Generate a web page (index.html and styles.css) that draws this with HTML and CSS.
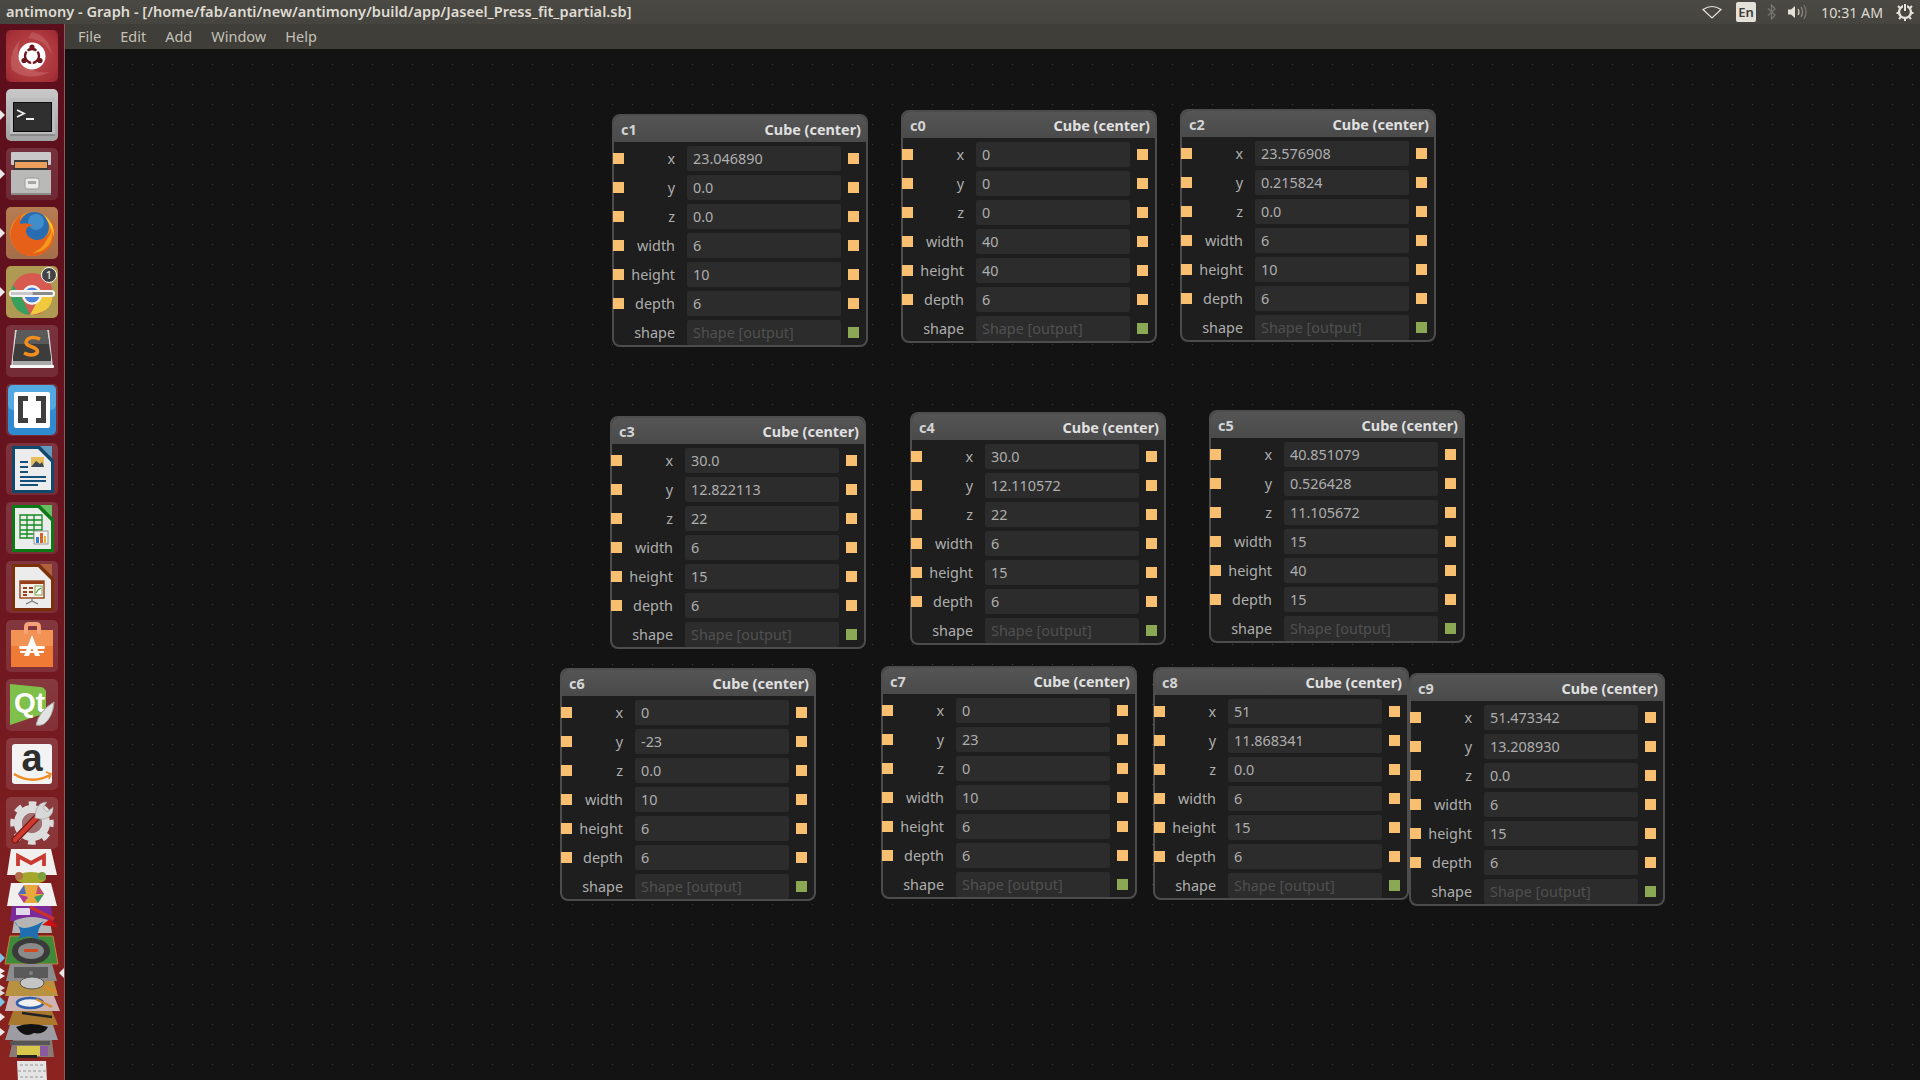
FILE: index.html
```html
<!DOCTYPE html>
<html>
<head>
  <meta charset="utf-8">
  <title>antimony - Graph</title>
  <link rel="stylesheet" href="styles.css">
</head>
<body>
  <div class="titlebar">
    <div class="window-title">antimony - Graph - [/home/fab/anti/new/antimony/build/app/Jaseel_Press_fit_partial.sb]</div>
    <div class="indicators">
      <svg class="ind-wifi" width="20" height="14" viewBox="0 0 20 14"><path d="M1 4.5 Q10 -1.5 19 4.5 L10 13 Z" fill="none" stroke="#e4e1d8" stroke-width="1.2"/></svg>
      <div class="ind-lang">En</div>
      <svg class="ind-bt" width="9" height="16" viewBox="0 0 9 16"><path d="M1 4.5 L8 11 L4.5 15 V1 L8 5 L1 11.5" fill="none" stroke="#77756f" stroke-width="1.3"/></svg>
      <svg class="ind-vol" width="20" height="16" viewBox="0 0 20 16"><path d="M0 5.5 H3 L7 2 V14 L3 10.5 H0 Z" fill="#e4e1d8"/><path d="M10 5 Q12 8 10 11" fill="none" stroke="#cfccc3" stroke-width="1.3"/><path d="M13 3 Q16 8 13 13" fill="none" stroke="#8c8a84" stroke-width="1.3"/><path d="M16 1 Q20 8 16 15" fill="none" stroke="#77756f" stroke-width="1.3"/></svg>
      <div class="ind-clock">10:31 AM</div>
      <svg class="ind-gear" width="18" height="18" viewBox="0 0 18 18"><circle cx="9" cy="9" r="6" fill="none" stroke="#e4e1d8" stroke-width="2.4"/><path d="M9 0 V9" stroke="#45443f" stroke-width="4"/><path d="M9 1 V8" stroke="#e4e1d8" stroke-width="2"/><path d="M2 3 L4 5 M16 3 L14 5 M0.5 10 H3 M17.5 10 H15 M3 16 L5 14 M15 16 L13 14 M9 18 V15.5" stroke="#e4e1d8" stroke-width="2"/></svg>
    </div>
  </div>
  <div class="desktop">
    <div class="launcher">
      <div class="tile tile-ubuntu">
        <svg width="52" height="52" viewBox="0 0 52 52"><path d="M6 40 Q22 52 44 42 Q30 44 18 36 Q8 28 14 10 Q2 24 6 40 Z" fill="#d98a8a" opacity="0.35"/><path d="M26 2 Q44 6 46 26 Q40 10 22 8 Z" fill="#d98a8a" opacity="0.3"/><circle cx="26" cy="26" r="13.5" fill="#fff"/><circle cx="26" cy="26" r="7" fill="none" stroke="#6e1520" stroke-width="2.4"/><path d="M26 26 L17 17 M26 26 L35 17 M26 26 V38" stroke="#fff" stroke-width="1.6"/><circle cx="26" cy="17" r="2.6" fill="#6e1520"/><circle cx="18" cy="30.5" r="2.6" fill="#6e1520"/><circle cx="34" cy="30.5" r="2.6" fill="#6e1520"/></svg>
      </div>
      <div class="tile tile-terminal">
        <span class="pip"></span>
        <svg width="52" height="52" viewBox="0 0 52 52"><rect x="4" y="9" width="45" height="38" rx="1" fill="#bcbcbc"/><rect x="4" y="45" width="45" height="2" fill="#8a8a8a"/><rect x="7" y="13" width="39" height="30" fill="#0c0c0c"/><rect x="8" y="14" width="37" height="28" fill="#2f2f2f"/><path d="M11 21 L18 24.5 L11 28" fill="none" stroke="#eee" stroke-width="1.8"/><rect x="20" y="29" width="8" height="2" fill="#eee"/></svg>
      </div>
      <div class="tile tile-plain">
        <span class="pip"></span>
        <svg width="52" height="52" viewBox="0 0 52 52"><rect x="5" y="4" width="40" height="13" rx="1" fill="#c9c9c9"/><rect x="8" y="12" width="34" height="10" fill="#3b3b3b"/><rect x="9" y="14" width="32" height="6" fill="#eda05e"/><path d="M5 22 H45 V47 H5 Z" fill="#b9b9b7"/><rect x="5" y="45" width="40" height="2" fill="#8a8a88"/><rect x="19" y="30" width="14" height="11" rx="2" fill="#e9e9e9" stroke="#9a9a9a"/><rect x="22" y="33" width="8" height="3" fill="#a5a5a5"/></svg>
      </div>
      <div class="tile tile-firefox">
        <span class="pip"></span>
        <svg width="52" height="52" viewBox="0 0 52 52"><circle cx="26" cy="27" r="22" fill="#f08a1c"/><circle cx="28" cy="20" r="15" fill="#2a6cb0"/><circle cx="30" cy="15" r="8" fill="#3f8ecb"/><path d="M4 30 Q5 15 17 6 Q13 12 14 17 Q22 15 28 19 Q22 18 20 23 Q19 30 29 33 Q38 34 44 25 Q48 17 45 11 Q52 21 47 34 Q41 49 26 49 Q9 49 4 30 Z" fill="#e7601a"/><path d="M38 8 Q49 16 48 30 Q45 20 42 15 Q40 11 38 8 Z" fill="#f9c32c"/><path d="M41 32 Q45 27 46 22 Q48 30 43 38 Q36 46 26 46 Q37 42 41 32 Z" fill="#f39a1c"/></svg>
      </div>
      <div class="tile tile-chrome">
        <span class="pip"></span>
        <svg width="52" height="52" viewBox="0 0 52 52"><circle cx="26" cy="28" r="21" fill="#d65a50"/><path d="M7 19 L18 36 L24 49 Q9 48 5 31 Q4 25 7 19 Z" fill="#37a05c"/><path d="M24 49 L33 32 L35 25 H46 Q50 46 24 49 Z" fill="#f0c93c"/><circle cx="26" cy="29" r="10" fill="#f3f3f3"/><circle cx="26" cy="29" r="7.5" fill="#4b82d8"/><rect x="3" y="24" width="46" height="7" rx="3.5" fill="#f6f6f6"/><rect x="5" y="26" width="42" height="3" rx="1.5" fill="#8a8a8a"/><rect x="5" y="26" width="22" height="3" rx="1.5" fill="#c9c9c9"/></svg>
        <span class="tile-badge">1</span>
      </div>
      <div class="tile tile-plain">
        <svg width="52" height="52" viewBox="0 0 52 52"><path d="M9 5 H43 L47 43 H5 Z" fill="#d2d2d2"/><path d="M11 5 H41 L45 32 V36 H7 V32 Z" fill="#3c3c3c"/><path d="M11 5 H41 L43 19 H9 Z" fill="#5a5a5a"/><rect x="7" y="36" width="38" height="4" fill="#a8a8a8"/><rect x="4" y="40" width="44" height="3" rx="1" fill="#f7f7f7"/><path d="M34 14 Q26 11 22 14 Q17 19 25 21.5 Q33 24 31 28 Q26 32 18 28" fill="none" stroke="#f28e20" stroke-width="3.6"/></svg>
      </div>
      <div class="tile tile-plain">
        <svg width="52" height="52" viewBox="0 0 52 52"><rect x="2" y="1" width="48" height="50" rx="5" fill="#2f8ad0"/><rect x="2" y="1" width="48" height="25" rx="5" fill="#52a8e0"/><rect x="8" y="8" width="36" height="36" rx="2" fill="#fff"/><path d="M22 12 H12 V39 H22 V34 H17 V17 H22 Z M30 12 H40 V39 H30 V34 H35 V17 H30 Z" fill="#3f3f3f"/></svg>
      </div>
      <div class="tile tile-plain">
        <svg width="52" height="52" viewBox="0 0 52 52"><path d="M6 3 H34 L48 17 V50 H6 Z" fill="#10486e"/><path d="M34 3 H46 V15 Z" fill="#5f9ac0"/><path d="M9 6 H32 L45 19 V47 H9 Z" fill="#ececec"/><rect x="14" y="18" width="8" height="2" fill="#14517a"/><rect x="14" y="23" width="8" height="2" fill="#14517a"/><rect x="14" y="28" width="8" height="2" fill="#14517a"/><rect x="25" y="14" width="13" height="10" fill="#e8bd5c"/><path d="M25 24 L30 18 L34 21 L36 19 L38 24 Z" fill="#3a4a56"/><rect x="14" y="33" width="26" height="2" fill="#14517a"/><rect x="14" y="37" width="26" height="2" fill="#14517a"/><rect x="14" y="41" width="18" height="2" fill="#14517a"/></svg>
      </div>
      <div class="tile tile-plain">
        <svg width="52" height="52" viewBox="0 0 52 52"><path d="M6 3 H34 L48 17 V50 H6 Z" fill="#0b7a16"/><path d="M34 3 H46 V15 Z" fill="#63c25f"/><path d="M9 6 H32 L45 19 V47 H9 Z" fill="#ececec"/><path d="M14 13 H36 V36 H14 Z M14 18 H36 M14 23 H36 M14 28 H36 M14 32 H36 M21 13 V36 M28 13 V36" fill="none" stroke="#128a20" stroke-width="1.3"/><rect x="28" y="29" width="14" height="13" fill="#f4f4f4" stroke="#999"/><rect x="30" y="35" width="3" height="6" fill="#2f7fc1"/><rect x="34" y="31" width="3" height="10" fill="#d9622b"/><rect x="38" y="34" width="2" height="7" fill="#e2b53a"/></svg>
      </div>
      <div class="tile tile-plain">
        <svg width="52" height="52" viewBox="0 0 52 52"><path d="M6 3 H34 L48 17 V50 H6 Z" fill="#7a3008"/><path d="M34 3 H46 V15 Z" fill="#b0603a"/><path d="M9 6 H32 L45 19 V47 H9 Z" fill="#ececec"/><rect x="14" y="20" width="24" height="17" fill="#f6f0ea" stroke="#98401a" stroke-width="1.4"/><rect x="14" y="20" width="24" height="3" fill="#98401a"/><rect x="17" y="26" width="4" height="2" fill="#98401a"/><rect x="17" y="30" width="4" height="2" fill="#98401a"/><rect x="17" y="33" width="4" height="2" fill="#98401a"/><rect x="23" y="26" width="4" height="2" fill="#98401a"/><rect x="23" y="30" width="4" height="2" fill="#98401a"/><rect x="29" y="25" width="7" height="9" fill="#fff" stroke="#7aa24c"/><path d="M30 32 L32 29 L35 27" fill="none" stroke="#4d9a2a" stroke-width="1.2"/><path d="M26 37 V40 M26 40 L20 43 M26 40 L32 43" stroke="#777" stroke-width="1.2"/></svg>
      </div>
      <div class="tile tile-plain">
        <svg width="52" height="52" viewBox="0 0 52 52"><path d="M5 10 H47 V47 H5 Z" fill="#ef7a35"/><path d="M5 10 H47 V26 H5 Z" fill="#f29354"/><path d="M20 14 V7 Q20 4 23 4 H30 Q33 4 33 7 V14" fill="none" stroke="#f5a27a" stroke-width="4"/><path d="M26 15 L18 36 H23 L26 27 L29 36 H34 Z" fill="#fff"/><rect x="13" y="26" width="26" height="3" rx="1.5" fill="#fff"/><rect x="14" y="31" width="24" height="2" fill="#fff"/></svg>
      </div>
      <div class="tile tile-plain">
        <svg width="52" height="52" viewBox="0 0 52 52"><path d="M4 5 L34 8 Q38 8 40 12 V34 L4 46 Z" fill="#7fc04a"/><text class="qt-mark" x="8" y="33">Qt</text><path d="M30 46 Q33 32 48 23 Q47 38 38 45 Q34 47 30 46 Z" fill="#e3e3e3" stroke="#a8a8a8"/></svg>
      </div>
      <div class="tile tile-plain">
        <svg width="52" height="52" viewBox="0 0 52 52"><rect x="6" y="6" width="40" height="40" rx="3" fill="#f3f3f3"/><text class="amazon-mark" x="26" y="33">a</text><path d="M8 36 Q26 47 44 37" fill="none" stroke="#f08c1e" stroke-width="2.4"/><path d="M40 34 L45 36 L43 41" fill="none" stroke="#f08c1e" stroke-width="1.6"/></svg>
      </div>
      <div class="tile tile-plain tile-settings">
        <svg width="52" height="52" viewBox="0 0 52 52"><circle cx="26" cy="26" r="19.5" fill="none" stroke="#dcdcdc" stroke-width="4.5" stroke-dasharray="7.65 7.65" stroke-dashoffset="3.8"/><circle cx="26" cy="26" r="14" fill="none" stroke="#dcdcdc" stroke-width="8"/><circle cx="26" cy="26" r="10" fill="#a07070"/><path d="M9 43 L31 20" stroke="#7a1a16" stroke-width="7" stroke-linecap="round"/><path d="M9 43 L31 20" stroke="#cf3a30" stroke-width="4.6" stroke-linecap="round"/><path d="M29 21 Q29 12 34 7 Q37 5 41 5 L37 11 L41 15 L47 10 Q48 16 43 20 Q39 23 34 22 Z" fill="#d8d8d8" stroke="#999" stroke-width="0.6"/></svg>
      </div>
      <svg class="launcher-stack" width="64" height="232" viewBox="0 0 64 232">
        <path d="M11 0 H51 L57 26 H7 Z" fill="#f1f0ee"/>
        <path d="M18 17 V7 L31 14 L44 7 V17" fill="none" stroke="#c93a30" stroke-width="3.8"/>
        <ellipse cx="31" cy="29" rx="15" ry="6" fill="#a5a72c"/>
        <circle cx="19" cy="27" r="4" fill="#b0704a"/>
        <circle cx="42" cy="27" r="4" fill="#7aa040"/>
        <path d="M11 34 H51 L57 57 H7 Z" fill="#f1f0ee"/>
        <path d="M24 36 H38 L44 45 L38 54 H24 L18 45 Z" fill="#e8a83c"/>
        <path d="M24 36 L18 45 L26 45 Z" fill="#4a6fc0"/>
        <path d="M38 36 L44 45 L36 45 Z" fill="#c04a70"/>
        <path d="M18 45 L24 54 L28 48 Z" fill="#b03a9a"/>
        <path d="M44 45 L38 54 L34 48 Z" fill="#3a9a6a"/>
        <path d="M12 57 H51 L53 72 H10 Z" fill="#7a2a9a"/>
        <rect x="16" y="59" width="14" height="7" fill="#e2d6ea"/>
        <path d="M30 58 L54 70" stroke="#c8302c" stroke-width="3.5"/>
        <path d="M14 72 Q31 64 50 72 L52 84 H12 Z" fill="#b5b5b5"/>
        <path d="M50 70 L58 78 L42 76 Z" fill="#d01010"/>
        <path d="M5 115 L10 87 H53 L58 115 Z" fill="#3f8a3a" stroke="#d07a3a"/>
        <ellipse cx="31" cy="102" rx="19" ry="13" fill="#3a3a3a"/>
        <ellipse cx="31" cy="102" rx="13" ry="8" fill="#8a8a8a"/>
        <rect x="24" y="100" width="14" height="3" fill="#d04a20"/>
        <path d="M14 72 Q20 86 44 72 Q34 84 40 92 Q30 84 18 90 Q24 82 14 72 Z" fill="#1e6eb0"/>
        <path d="M6 132 L10 115 H52 L57 132 Z" fill="#8d8d8d"/>
        <rect x="14" y="118" width="34" height="11" fill="#5a5a5a"/>
        <circle cx="31" cy="124" r="2" fill="#808080"/>
        <path d="M5 147 L9 132 H54 L58 147 Z" fill="#b89240"/>
        <ellipse cx="32" cy="134" rx="12" ry="6" fill="#c5c5c5" stroke="#555"/>
        <path d="M43 137 L56 143" stroke="#d88a2a" stroke-width="3"/>
        <path d="M5 162 L9 147 H54 L60 162 Z" fill="#cdb5b5"/>
        <ellipse cx="30" cy="154" rx="13" ry="5" fill="#f0f0f0" stroke="#2f5fa8" stroke-width="2.5"/>
        <path d="M36 150 L52 158" stroke="#d88a2a" stroke-width="2.5"/>
        <path d="M8 176 L13 162 H52 L58 176 Z" fill="#a8782e"/>
        <path d="M22 164 L52 168" stroke="#222" stroke-width="2.5"/>
        <path d="M5 191 L10 176 H53 L58 191 Z" fill="#9c9ca2"/>
        <path d="M16 178 Q30 172 48 178 Q44 186 34 184 Q24 190 16 178 Z" fill="#111"/>
        <path d="M9 208 L13 191 H52 L54 208 Z" fill="#8a7a78"/>
        <rect x="10" y="192" width="40" height="4" fill="#555"/>
        <rect x="17" y="197" width="24" height="10" fill="#d8c74a"/>
        <rect x="40" y="197" width="8" height="10" fill="#8a5aa0"/>
        <rect x="17" y="206" width="20" height="3" fill="#222"/>
        <path d="M17 212 H46 L47 232 H18 Z" fill="#e4e4e4"/>
        <path d="M20 216 H44 M18 222 H46 M20 228 H44" stroke="#bdbdbd" stroke-width="2" stroke-dasharray="3 2"/>
        <path d="M0 104 L5 109 L0 114 Z" fill="#7cc3e8"/>
        <path d="M0 119 L5 122 L0 125 Z M0 124 L5 127 L0 130 Z" fill="#eee"/>
        <path d="M0 136 L5 139 L0 142 Z M0 141 L5 144 L0 147 Z" fill="#ddd"/>
        <path d="M0 148 L5 153 L0 158 Z" fill="#7cc3e8"/>
        <path d="M0 164 L5 168 L0 172 Z" fill="#e8e8e8"/>
        <path d="M0 179 L5 183 L0 187 Z" fill="#e8e8e8"/>
        <path d="M64 119 L59 124 L64 129 Z" fill="#e8e8e8"/>
      </svg>
    </div>
    <div class="main">
      <div class="menubar">
        <div class="menu-item">File</div>
        <div class="menu-item">Edit</div>
        <div class="menu-item">Add</div>
        <div class="menu-item">Window</div>
        <div class="menu-item">Help</div>
      </div>
      <div class="canvas">

        <div class="node node-c1">
          <div class="node-head"><span class="node-name">c1</span><span class="node-type">Cube (center)</span></div>
          <div class="row"><span class="port"></span><span class="label">x</span><span class="field">23.046890</span><span class="port"></span></div>
          <div class="row"><span class="port"></span><span class="label">y</span><span class="field">0.0</span><span class="port"></span></div>
          <div class="row"><span class="port"></span><span class="label">z</span><span class="field">0.0</span><span class="port"></span></div>
          <div class="row"><span class="port"></span><span class="label">width</span><span class="field">6</span><span class="port"></span></div>
          <div class="row"><span class="port"></span><span class="label">height</span><span class="field">10</span><span class="port"></span></div>
          <div class="row"><span class="port"></span><span class="label">depth</span><span class="field">6</span><span class="port"></span></div>
          <div class="row"><span class="port port-none"></span><span class="label">shape</span><span class="field field-output">Shape [output]</span><span class="port port-shape"></span></div>
        </div>

        <div class="node node-c0">
          <div class="node-head"><span class="node-name">c0</span><span class="node-type">Cube (center)</span></div>
          <div class="row"><span class="port"></span><span class="label">x</span><span class="field">0</span><span class="port"></span></div>
          <div class="row"><span class="port"></span><span class="label">y</span><span class="field">0</span><span class="port"></span></div>
          <div class="row"><span class="port"></span><span class="label">z</span><span class="field">0</span><span class="port"></span></div>
          <div class="row"><span class="port"></span><span class="label">width</span><span class="field">40</span><span class="port"></span></div>
          <div class="row"><span class="port"></span><span class="label">height</span><span class="field">40</span><span class="port"></span></div>
          <div class="row"><span class="port"></span><span class="label">depth</span><span class="field">6</span><span class="port"></span></div>
          <div class="row"><span class="port port-none"></span><span class="label">shape</span><span class="field field-output">Shape [output]</span><span class="port port-shape"></span></div>
        </div>

        <div class="node node-c2">
          <div class="node-head"><span class="node-name">c2</span><span class="node-type">Cube (center)</span></div>
          <div class="row"><span class="port"></span><span class="label">x</span><span class="field">23.576908</span><span class="port"></span></div>
          <div class="row"><span class="port"></span><span class="label">y</span><span class="field">0.215824</span><span class="port"></span></div>
          <div class="row"><span class="port"></span><span class="label">z</span><span class="field">0.0</span><span class="port"></span></div>
          <div class="row"><span class="port"></span><span class="label">width</span><span class="field">6</span><span class="port"></span></div>
          <div class="row"><span class="port"></span><span class="label">height</span><span class="field">10</span><span class="port"></span></div>
          <div class="row"><span class="port"></span><span class="label">depth</span><span class="field">6</span><span class="port"></span></div>
          <div class="row"><span class="port port-none"></span><span class="label">shape</span><span class="field field-output">Shape [output]</span><span class="port port-shape"></span></div>
        </div>

        <div class="node node-c3">
          <div class="node-head"><span class="node-name">c3</span><span class="node-type">Cube (center)</span></div>
          <div class="row"><span class="port"></span><span class="label">x</span><span class="field">30.0</span><span class="port"></span></div>
          <div class="row"><span class="port"></span><span class="label">y</span><span class="field">12.822113</span><span class="port"></span></div>
          <div class="row"><span class="port"></span><span class="label">z</span><span class="field">22</span><span class="port"></span></div>
          <div class="row"><span class="port"></span><span class="label">width</span><span class="field">6</span><span class="port"></span></div>
          <div class="row"><span class="port"></span><span class="label">height</span><span class="field">15</span><span class="port"></span></div>
          <div class="row"><span class="port"></span><span class="label">depth</span><span class="field">6</span><span class="port"></span></div>
          <div class="row"><span class="port port-none"></span><span class="label">shape</span><span class="field field-output">Shape [output]</span><span class="port port-shape"></span></div>
        </div>

        <div class="node node-c4">
          <div class="node-head"><span class="node-name">c4</span><span class="node-type">Cube (center)</span></div>
          <div class="row"><span class="port"></span><span class="label">x</span><span class="field">30.0</span><span class="port"></span></div>
          <div class="row"><span class="port"></span><span class="label">y</span><span class="field">12.110572</span><span class="port"></span></div>
          <div class="row"><span class="port"></span><span class="label">z</span><span class="field">22</span><span class="port"></span></div>
          <div class="row"><span class="port"></span><span class="label">width</span><span class="field">6</span><span class="port"></span></div>
          <div class="row"><span class="port"></span><span class="label">height</span><span class="field">15</span><span class="port"></span></div>
          <div class="row"><span class="port"></span><span class="label">depth</span><span class="field">6</span><span class="port"></span></div>
          <div class="row"><span class="port port-none"></span><span class="label">shape</span><span class="field field-output">Shape [output]</span><span class="port port-shape"></span></div>
        </div>

        <div class="node node-c5">
          <div class="node-head"><span class="node-name">c5</span><span class="node-type">Cube (center)</span></div>
          <div class="row"><span class="port"></span><span class="label">x</span><span class="field">40.851079</span><span class="port"></span></div>
          <div class="row"><span class="port"></span><span class="label">y</span><span class="field">0.526428</span><span class="port"></span></div>
          <div class="row"><span class="port"></span><span class="label">z</span><span class="field">11.105672</span><span class="port"></span></div>
          <div class="row"><span class="port"></span><span class="label">width</span><span class="field">15</span><span class="port"></span></div>
          <div class="row"><span class="port"></span><span class="label">height</span><span class="field">40</span><span class="port"></span></div>
          <div class="row"><span class="port"></span><span class="label">depth</span><span class="field">15</span><span class="port"></span></div>
          <div class="row"><span class="port port-none"></span><span class="label">shape</span><span class="field field-output">Shape [output]</span><span class="port port-shape"></span></div>
        </div>

        <div class="node node-c6">
          <div class="node-head"><span class="node-name">c6</span><span class="node-type">Cube (center)</span></div>
          <div class="row"><span class="port"></span><span class="label">x</span><span class="field">0</span><span class="port"></span></div>
          <div class="row"><span class="port"></span><span class="label">y</span><span class="field">-23</span><span class="port"></span></div>
          <div class="row"><span class="port"></span><span class="label">z</span><span class="field">0.0</span><span class="port"></span></div>
          <div class="row"><span class="port"></span><span class="label">width</span><span class="field">10</span><span class="port"></span></div>
          <div class="row"><span class="port"></span><span class="label">height</span><span class="field">6</span><span class="port"></span></div>
          <div class="row"><span class="port"></span><span class="label">depth</span><span class="field">6</span><span class="port"></span></div>
          <div class="row"><span class="port port-none"></span><span class="label">shape</span><span class="field field-output">Shape [output]</span><span class="port port-shape"></span></div>
        </div>

        <div class="node node-c7">
          <div class="node-head"><span class="node-name">c7</span><span class="node-type">Cube (center)</span></div>
          <div class="row"><span class="port"></span><span class="label">x</span><span class="field">0</span><span class="port"></span></div>
          <div class="row"><span class="port"></span><span class="label">y</span><span class="field">23</span><span class="port"></span></div>
          <div class="row"><span class="port"></span><span class="label">z</span><span class="field">0</span><span class="port"></span></div>
          <div class="row"><span class="port"></span><span class="label">width</span><span class="field">10</span><span class="port"></span></div>
          <div class="row"><span class="port"></span><span class="label">height</span><span class="field">6</span><span class="port"></span></div>
          <div class="row"><span class="port"></span><span class="label">depth</span><span class="field">6</span><span class="port"></span></div>
          <div class="row"><span class="port port-none"></span><span class="label">shape</span><span class="field field-output">Shape [output]</span><span class="port port-shape"></span></div>
        </div>

        <div class="node node-c8">
          <div class="node-head"><span class="node-name">c8</span><span class="node-type">Cube (center)</span></div>
          <div class="row"><span class="port"></span><span class="label">x</span><span class="field">51</span><span class="port"></span></div>
          <div class="row"><span class="port"></span><span class="label">y</span><span class="field">11.868341</span><span class="port"></span></div>
          <div class="row"><span class="port"></span><span class="label">z</span><span class="field">0.0</span><span class="port"></span></div>
          <div class="row"><span class="port"></span><span class="label">width</span><span class="field">6</span><span class="port"></span></div>
          <div class="row"><span class="port"></span><span class="label">height</span><span class="field">15</span><span class="port"></span></div>
          <div class="row"><span class="port"></span><span class="label">depth</span><span class="field">6</span><span class="port"></span></div>
          <div class="row"><span class="port port-none"></span><span class="label">shape</span><span class="field field-output">Shape [output]</span><span class="port port-shape"></span></div>
        </div>

        <div class="node node-c9">
          <div class="node-head"><span class="node-name">c9</span><span class="node-type">Cube (center)</span></div>
          <div class="row"><span class="port"></span><span class="label">x</span><span class="field">51.473342</span><span class="port"></span></div>
          <div class="row"><span class="port"></span><span class="label">y</span><span class="field">13.208930</span><span class="port"></span></div>
          <div class="row"><span class="port"></span><span class="label">z</span><span class="field">0.0</span><span class="port"></span></div>
          <div class="row"><span class="port"></span><span class="label">width</span><span class="field">6</span><span class="port"></span></div>
          <div class="row"><span class="port"></span><span class="label">height</span><span class="field">15</span><span class="port"></span></div>
          <div class="row"><span class="port"></span><span class="label">depth</span><span class="field">6</span><span class="port"></span></div>
          <div class="row"><span class="port port-none"></span><span class="label">shape</span><span class="field field-output">Shape [output]</span><span class="port port-shape"></span></div>
        </div>

      </div>
    </div>
  </div>
</body>
</html>
```

FILE: styles.css
```css
:root {
  --port-color: #f8bf70;
  --port-shape: #8ba955;
  --text-soft: #aeaeae;
}
* {
  margin: 0;
  padding: 0;
  box-sizing: border-box;
}
html, body {
  width: 1920px;
  height: 1080px;
  overflow: hidden;
}
body {
  font-family: "Noto Sans", sans-serif;
  background: #131313;
  display: flex;
  flex-direction: column;
}

/* top panel */
.titlebar {
  height: 24px;
  flex: none;
  display: flex;
  align-items: center;
  justify-content: space-between;
  padding: 0 6px;
  background: linear-gradient(#4a4943, #45443f);
}
.window-title {
  font-size: 14.6px;
  font-weight: 600;
  color: #dfdbd2;
  white-space: nowrap;
  padding-bottom: 2px;
}
.indicators {
  display: flex;
  align-items: center;
}
.ind-wifi { margin-right: 14px; }
.ind-lang {
  width: 20px;
  height: 20px;
  border-radius: 2px;
  background: #e4e1d8;
  color: #3f3e39;
  font-size: 13px;
  font-weight: 600;
  line-height: 20px;
  text-align: center;
  margin-right: 11px;
}
.ind-bt { margin-right: 12px; }
.ind-vol { margin-right: 13px; }
.ind-clock {
  font-size: 14.2px;
  color: #dfdbd2;
  white-space: nowrap;
  margin-right: 13px;
}

/* launcher */
.desktop {
  flex: 1;
  display: flex;
  min-height: 0;
}
.launcher {
  width: 65px;
  flex: none;
  display: flex;
  flex-direction: column;
  gap: 7px;
  padding: 6px 0 0 6px;
  background: linear-gradient(#5b0e1c, #6a1520 50%, #8b2420);
  border-right: 1px solid #96565a;
  position: relative;
  overflow: hidden;
}
.tile {
  width: 52px;
  height: 52px;
  flex: none;
  border-radius: 5px;
  position: relative;
}
.tile svg {
  display: block;
}
.tile-plain {
  background: linear-gradient(rgba(255, 255, 255, 0.14), rgba(255, 255, 255, 0.1));
}
.tile-ubuntu {
  background: radial-gradient(circle at 50% 50%, #c04a4e, #a8343a 75%, #96252e);
}
.tile-terminal {
  background: linear-gradient(#c9c9c9, #a2a2a2);
}
.tile-firefox {
  background: linear-gradient(#b67c52, #a56e4a);
}
.tile-chrome {
  background: #ae9a52;
}
.tile-settings {
  margin-bottom: -7px;
}
.tile-badge {
  position: absolute;
  top: 1px;
  right: 1px;
  width: 16px;
  height: 16px;
  border-radius: 50%;
  border: 1px solid #fff;
  background: #444;
  color: #fff;
  font-size: 11px;
  line-height: 14px;
  text-align: center;
}
.pip {
  position: absolute;
  left: -6px;
  top: 21px;
  border-left: 5px solid #e8e8e8;
  border-top: 5px solid transparent;
  border-bottom: 5px solid transparent;
}
.launcher-stack {
  flex: none;
  display: block;
  margin-left: -6px;
}
.qt-mark {
  font-family: "Liberation Sans", sans-serif;
  font-size: 28px;
  font-weight: 700;
  fill: #fff;
}
.amazon-mark {
  font-family: "Liberation Sans", sans-serif;
  font-size: 38px;
  font-weight: 700;
  fill: #2e2e2e;
  text-anchor: middle;
}

/* window */
.main {
  flex: 1;
  display: flex;
  flex-direction: column;
  min-width: 0;
}
.menubar {
  height: 25px;
  flex: none;
  display: flex;
  align-items: center;
  padding: 0 0 2px 13px;
  background: #3f3e39;
}
.menu-item {
  font-size: 14.5px;
  color: #c4c1b8;
  margin-right: 19px;
}
.canvas {
  flex: 1;
  position: relative;
  background-color: #131313;
  background-image: conic-gradient(at 1px 1px, transparent 75%, #3c3c3c 0);
  background-size: 20px 20px;
  background-position: 7px 15px;
}

/* nodes sit on a free canvas */
.node {
  position: absolute;
  width: 256px;
  height: 233px;
  border: 2px solid #4d4d4d;
  border-radius: 8px;
  background: #1e1e1e;
}
.node-c1 { left: 547px; top: 65px; }
.node-c0 { left: 836px; top: 61px; }
.node-c2 { left: 1115px; top: 60px; }
.node-c3 { left: 545px; top: 367px; }
.node-c4 { left: 845px; top: 363px; }
.node-c5 { left: 1144px; top: 361px; }
.node-c6 { left: 495px; top: 619px; }
.node-c7 { left: 816px; top: 617px; }
.node-c8 { left: 1088px; top: 618px; }
.node-c9 { left: 1344px; top: 624px; }

.node-head {
  height: 26px;
  margin: 0 0 4px;
  padding: 0 5px 0 7px;
  display: flex;
  align-items: center;
  justify-content: space-between;
  background: linear-gradient(#555, #4a4a4a);
  border-radius: 6px 6px 0 0;
  font-size: 14.4px;
  font-weight: 700;
}
.node-name {
  color: #d4d4d4;
}
.node-type {
  color: #e0e0e0;
}
.row {
  height: 25px;
  margin-bottom: 4px;
  display: flex;
  align-items: center;
  font-size: 14.4px;
  color: var(--text-soft);
}
.row:last-child {
  margin-bottom: 0;
}
.port {
  width: 11px;
  height: 11px;
  flex: none;
  background: var(--port-color);
}
.row .port:first-child {
  margin-left: -1px;
}
.port-shape {
  background: var(--port-shape);
}
.port-none {
  visibility: hidden;
}
.label {
  width: 51px;
  margin-right: 12px;
  text-align: right;
}
.field {
  width: 154px;
  height: 25px;
  margin-right: 7px;
  padding-left: 6px;
  line-height: 25px;
  border-radius: 2px;
  background: #2c2c2c;
  white-space: nowrap;
}
.field-output {
  color: #505050;
}
```
